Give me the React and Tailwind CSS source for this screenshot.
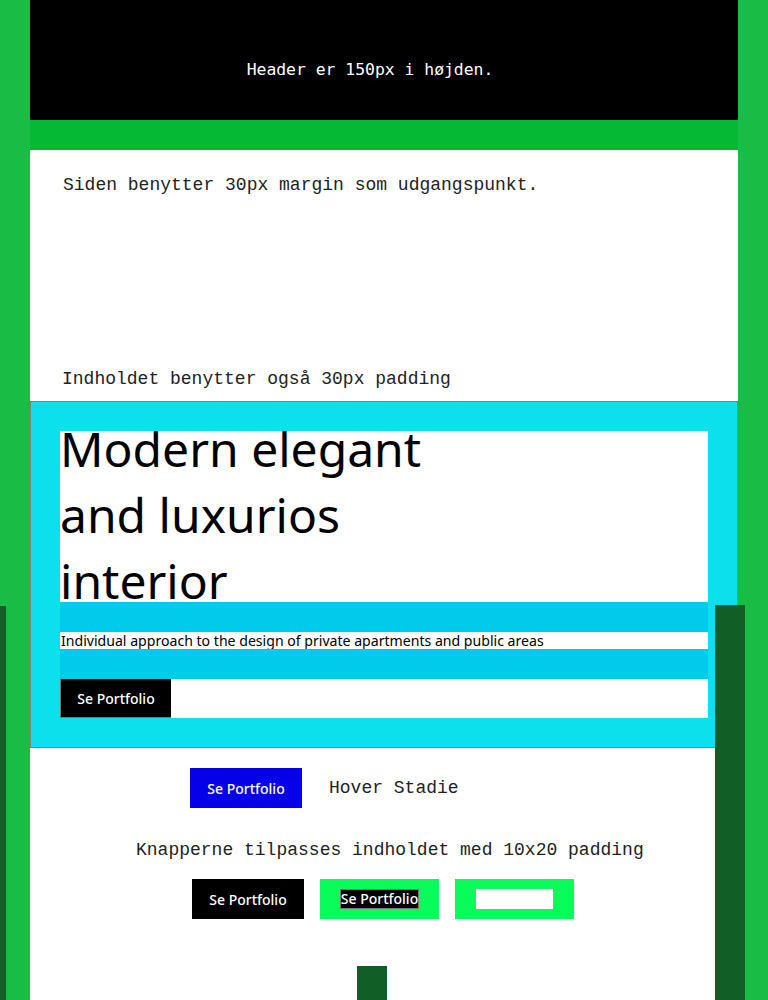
export default function App() {
  const sans = { fontFamily: '"Noto Sans", "Open Sans", sans-serif' };
  return (
    <div className="relative min-h-[1000px] overflow-hidden bg-[#19bd46]">
      {/* overlay bars */}
      <div className="absolute left-[-24px] top-[606px] h-[600px] w-[30px] bg-[#115e26] z-10" />
      <div className="absolute left-[715px] top-[605px] h-[600px] w-[30px] bg-[#115e26] z-10" />

      <div className="mx-[30px] flex flex-col">
        {/* header */}
        <header className="flex h-[120px] items-center justify-center bg-black pt-[21px] pr-[28px] font-['DejaVu_Sans_Mono',monospace] text-[16.4px] text-white">
          Header er 150px i højden.
        </header>
        <div className="h-[30px] bg-[#06b935]" />

        {/* intro */}
        <section className="flex h-[251px] flex-col justify-between bg-white pt-[25px] pb-[12px] font-['Liberation_Mono',monospace] text-[18px] leading-[20px] text-[#222]">
          <p className="pl-[33px]">Siden benytter 30px margin som udgangspunkt.</p>
          <p className="pl-[32px]">Indholdet benytter også 30px padding</p>
        </section>

        {/* hero */}
        <section className="border border-[#808080] bg-[#0ce0ec] p-[29px]">
          <div className="flex flex-col bg-white" style={sans}>
            <div className="h-[171px] overflow-hidden">
              <h1 className="mt-[-15px] w-[420px] text-[48px] font-normal leading-[66px] text-black">
                Modern elegant and luxurios interior
              </h1>
            </div>
            <div className="h-[30px] bg-[#00cbeb]" />
            <p className="h-[17px] whitespace-nowrap pl-[1px] text-[14.1px] leading-[17px] text-black">
              Individual approach to the design of private apartments and public areas
            </p>
            <div className="h-[30px] bg-[#00cbeb]" />
            <div className="flex">
              <button className="flex h-[39px] w-[111px] items-center justify-center border-b border-l border-[#777] bg-black text-[14px] font-medium text-white">
                Se Portfolio
              </button>
            </div>
          </div>
        </section>

        {/* lower */}
        <section className="flex min-h-[252px] flex-col bg-white pt-[20px]">
          <div className="flex items-center pl-[160px]">
            <button className="flex h-[40px] w-[112px] items-center justify-center bg-[#0500e8] text-[14px] font-medium text-white" style={sans}>
              Se Portfolio
            </button>
            <span className="ml-[27px] font-['Liberation_Mono',monospace] text-[18px] text-[#222]">Hover Stadie</span>
          </div>
          <p className="mt-[31px] pl-[106px] font-['Liberation_Mono',monospace] text-[18px] leading-[22px] text-[#222]">
            Knapperne tilpasses indholdet med 10x20 padding
          </p>
          <div className="mt-[18px] flex gap-[16px] pl-[162px]" style={sans}>
            <button className="flex h-[40px] w-[112px] items-center justify-center bg-black text-[14px] font-medium text-white">
              Se Portfolio
            </button>
            <button className="flex h-[40px] w-[119px] items-center justify-center bg-[#0afc5a]">
              <span className="inline-flex h-[20px] items-center justify-center whitespace-nowrap border border-[#777] bg-black text-[14px] font-medium leading-[18px] text-white">
                Se Portfolio
              </span>
            </button>
            <button className="flex h-[40px] w-[119px] items-center justify-center bg-[#0afc5a]">
              <span className="inline-flex h-[20px] items-center justify-center whitespace-nowrap bg-white text-[14px] font-medium leading-[18px] text-white">
                Se Portfolio
              </span>
            </button>
          </div>
          <div className="mt-[47px] ml-[327px] h-[60px] w-[30px] bg-[#115e26]" />
        </section>
      </div>
    </div>
  );
}
